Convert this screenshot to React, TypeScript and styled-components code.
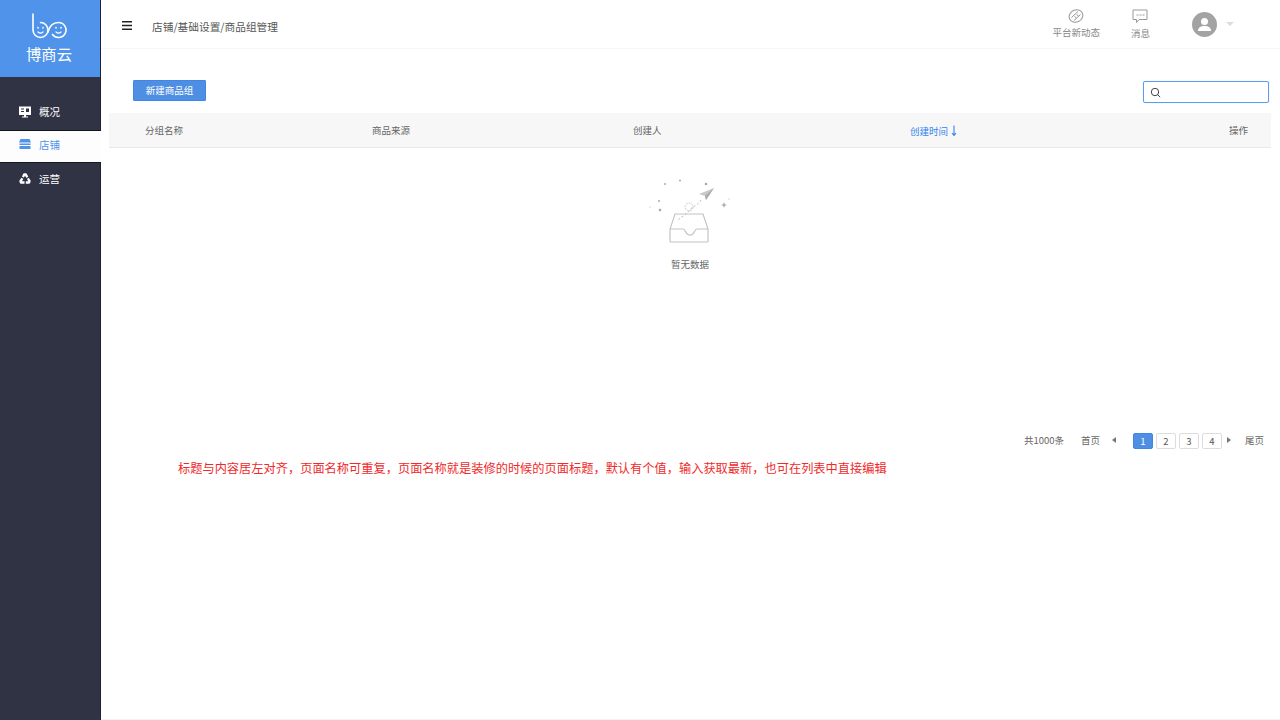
import React from 'react';
import styled, { createGlobalStyle } from 'styled-components';

const GlobalStyle = createGlobalStyle`
  html, body {
    margin: 0;
    height: 100%;
    background: #fff;
  }
  body {
    font-family: "Noto Sans CJK SC", "Noto Sans", sans-serif;
    font-size: 10px;
    color: #555;
    overflow: hidden;
  }
  #root {
    height: 100%;
  }
`;

const Page = styled.div`
  display: flex;
  width: 1280px;
  height: 720px;
`;

const Sidebar = styled.aside`
  width: 100px;
  flex-shrink: 0;
  background: #2f3344;
  border-right: 1px solid #1f2230;
`;

const LogoBox = styled.div`
  height: 77px;
  background: #4f94ea;
  display: flex;
  flex-direction: column;
  align-items: center;
  padding: 13px 2px 0 0;
  box-sizing: border-box;
  color: #fff;
`;

const LogoName = styled.div`
  font-size: 15.3px;
  line-height: 18px;
  margin-top: 5px;
`;

const Nav = styled.nav`
  padding-top: 19px;
`;

const NavItem = styled.div<{ $active?: boolean }>`
  height: 33px;
  display: flex;
  align-items: center;
  gap: 8px;
  padding: 0 0 2px 19px;
  font-size: 10.5px;
  box-sizing: border-box;
  color: ${({ $active }) => ($active ? '#4f94ea' : '#fff')};
  ${({ $active }) =>
    $active &&
    `
    background: #fdfdfd;
    margin: 1px -1px 0 0;
    padding-bottom: 5px;
    border-top: 1px solid #15171f;
    border-bottom: 1px solid #15171f;
  `}
`;

const Main = styled.main`
  flex: 1;
  min-width: 0;
  display: flex;
  flex-direction: column;
  border-bottom: 1px solid #f2f2f2;
  box-sizing: border-box;
`;

const Header = styled.header`
  height: 49px;
  flex-shrink: 0;
  display: flex;
  align-items: center;
  box-sizing: border-box;
  padding: 0 46px 0 21px;
  border-bottom: 1px solid #f6f6f6;
`;

const MenuButton = styled.div`
  display: flex;
  margin-top: 2px;
`;

const Crumbs = styled.div`
  margin: 4px 0 0 20px;
  font-size: 10.7px;
  color: #555;
`;

const HeaderRight = styled.div`
  margin-left: auto;
  display: flex;
  align-items: center;
`;

const HeaderAction = styled.div`
  display: flex;
  flex-direction: column;
  align-items: center;
  gap: 3px;
  margin-right: 31px;
  font-size: 9.5px;
  line-height: 13px;
  color: #888;
`;

const Avatar = styled.div`
  margin-left: 11px;
  width: 25px;
  height: 25px;
  border-radius: 50%;
  background: #a3a3a3;
  display: flex;
  align-items: center;
  justify-content: center;
`;

const Caret = styled.div`
  margin-left: 9px;
  width: 0;
  height: 0;
  border-left: 4px solid transparent;
  border-right: 4px solid transparent;
  border-top: 4px solid #dcdcdc;
`;

const Content = styled.div`
  flex: 1;
  padding: 31px 9px 0 8px;
`;

const Toolbar = styled.div`
  display: flex;
  align-items: flex-start;
  justify-content: space-between;
  padding-left: 24px;
  height: 23px;
  margin-bottom: 10px;
`;

const PrimaryButton = styled.button`
  width: 73px;
  height: 21px;
  padding: 0 0 1px;
  background: #4f8fe3;
  border: 1px solid #3f86e8;
  border-radius: 1px;
  color: #fff;
  font: inherit;
  font-size: 9.5px;
`;

const SearchBox = styled.div`
  width: 126px;
  height: 22px;
  box-sizing: border-box;
  margin: 1px 2px 0 0;
  border: 1px solid #5b9cee;
  border-radius: 2px;
  box-shadow: 0 0 1px rgba(79, 148, 234, 0.5);
  display: flex;
  align-items: center;
  padding-left: 6px;
`;

const TableHead = styled.div`
  display: grid;
  grid-template-columns: 227px 261px 277px 1fr auto;
  height: 35px;
  align-items: center;
  padding: 0 23px 0 36px;
  background: #f7f7f7;
  border-bottom: 1px solid #e8e8e8;
  box-sizing: border-box;
  font-size: 9.5px;
  color: #666;
`;

const HeadCell = styled.div<{ $active?: boolean }>`
  display: flex;
  align-items: center;
  gap: 3px;
  color: ${({ $active }) => ($active ? '#3384ee' : '#666')};
  margin-top: ${({ $active }) => ($active ? '1px' : '-1px')};
`;

const Empty = styled.div`
  height: 283px;
  display: flex;
  flex-direction: column;
  align-items: center;
  padding: 31px 0 0 0;
  box-sizing: border-box;
  color: #666;
  font-size: 9.5px;
`;

const Illustration = styled.div`
  display: flex;
  margin-right: 6px;
`;

const EmptyLabel = styled.div`
  margin-top: 14px;
  line-height: 14px;
`;

const Pagination = styled.div`
  display: flex;
  align-items: center;
  justify-content: flex-end;
  height: 18px;
  padding-right: 7px;
  font-size: 9.5px;
  color: #666;
`;

const PageLink = styled.span<{ $gap: number }>`
  margin-right: ${({ $gap }) => $gap}px;
`;

const Arrow = styled.span<{ $left?: boolean; $before?: number; $gap: number }>`
  width: 0;
  height: 0;
  margin-left: ${({ $before }) => $before ?? 0}px;
  margin-right: ${({ $gap }) => $gap}px;
  border-top: 3px solid transparent;
  border-bottom: 3px solid transparent;
  ${({ $left }) => ($left ? 'border-right: 4px solid #777;' : 'border-left: 4px solid #777;')}
`;

const PageButton = styled.span<{ $active?: boolean }>`
  width: 20px;
  height: 16px;
  margin: 1px 3px 0 0;
  box-sizing: border-box;
  display: flex;
  align-items: center;
  justify-content: center;
  border-radius: 2px;
  border: 1px solid ${({ $active }) => ($active ? '#3f86e8' : '#ddd')};
  background: ${({ $active }) => ($active ? '#4f8fe3' : '#fff')};
  color: ${({ $active }) => ($active ? '#fff' : '#555')};
`;

const Note = styled.div`
  margin: 11px 0 0 69px;
  font-size: 12.22px;
  line-height: 17px;
  white-space: nowrap;
  color: #f02a2a;
`;

const Logo = () => (
  <svg width="36" height="26" viewBox="0 0 36 26" fill="none" stroke="#fff" strokeWidth="1.6" strokeLinecap="round">
    <path d="M2 1v16a7.500 7.500 0 1 0 7.500-7.500" />
    <path d="M17 19c1.500-6 5-9.500 10.500-9.500a7.500 7.500 0 1 1-6 12" />
    <path d="M7 14.500v.5M12 14.500v.5M25 14.500v.5M30 14.500v.5" />
    <path d="M7 19c1.500 1.300 3.500 1.300 5 0M25 19c1.500 1.300 3.500 1.300 5 0" strokeWidth="1.200" />
  </svg>
);

const OverviewIcon = () => (
  <svg width="12" height="12" viewBox="0 0 12 12" fill="#fff">
    <path d="M0 .5h12v8.500H7v1.500h2v1H3v-1h2V9H0z" />
    <path d="M2 2.500h3v1H2zM2 5h3v1H2zM7 2.500h3V6H7z" fill="#2f3344" />
  </svg>
);

const ShopIcon = () => (
  <svg width="12" height="12" viewBox="0 0 12 12" fill="#4f94ea">
    <path d="M1.500 1h9L12 4.500H0zM0.500 5.500h11V11h-11z" />
    <path d="M0 7h12v1H0z" fill="#fff" />
  </svg>
);

const OperateIcon = () => (
  <svg width="12" height="12" viewBox="0 0 12 12" fill="#fff">
    <path d="M4.200 .8C5 .2 7 .2 7.800 .8L9.300 3.800 7.500 5 6 2.800 4.800 4.800 3 3.500z" />
    <path d="M.4 7.500 2.500 4.800 4.300 6 3 8.300H5.500V10.800H2C1 10.800 .2 8.800.4 7.500z" />
    <path d="M11.600 7.500 9.800 4.800 8 6 9.200 8.300H6.800V10.800H10C11 10.800 11.800 8.800 11.600 7.500z" />
  </svg>
);

const MenuIcon = () => (
  <svg width="10" height="9" viewBox="0 0 10 9" fill="#222">
    <path d="M0 0h10v1.500H0zM0 3.700h10v1.500H0zM0 7.500h10V9H0z" />
  </svg>
);

const NewsIcon = () => (
  <svg width="16" height="14" viewBox="0 0 16 14" fill="none" stroke="#999" strokeWidth="1">
    <ellipse cx="8" cy="7" rx="7" ry="6" transform="rotate(-25 8 7)" />
    <path d="M3.500 8.500 10 2.500M6 11.500l6.500-6" />
    <path d="M6.500 7.500l2 1.500M8.500 5.500l2 1.500" />
  </svg>
);

const MessageIcon = () => (
  <svg width="16" height="15" viewBox="0 0 16 15" fill="none" stroke="#999" strokeWidth="1">
    <path d="M1 1h14v9.500H7L4.500 13.500v-3H1z" />
    <path d="M4.500 6h2M7.500 6h2M10.500 6h2" />
  </svg>
);

const UserIcon = () => (
  <svg width="15" height="15" viewBox="0 0 15 15" fill="#fff">
    <circle cx="7.500" cy="4.500" r="3.500" />
    <path d="M1 14c0-3.500 2.500-5 6.500-5s6.500 1.500 6.500 5z" />
  </svg>
);

const SearchIcon = () => (
  <svg width="11" height="11" viewBox="0 0 11 11" fill="none" stroke="#444" strokeWidth="1">
    <circle cx="5" cy="5" r="3.700" />
    <path d="M7.700 7.700l2.500 2.500" />
  </svg>
);

const SortArrow = () => (
  <svg width="6" height="11" viewBox="0 0 6 11" fill="none" stroke="#3384ee" strokeWidth="1.100">
    <path d="M3 0.500v9.500M1 8l2 2.500L5 8" />
  </svg>
);

const EmptyIllustration = () => (
  <svg width="85" height="64" viewBox="0 0 85 64" fill="none">
    <g fill="#aaa">
      <circle cx="20" cy="5" r="1" />
      <circle cx="35" cy="1.500" r="1" />
      <circle cx="61" cy="5" r="1.300" />
      <circle cx="14" cy="22" r="1" />
      <circle cx="15" cy="31" r="1.300" />
      <circle cx="5" cy="28" r=".6" />
      <path d="M79 23l.8 2.200 2.200.8-2.200.8-.8 2.200-.8-2.200-2.200-.8 2.200-.8z" />
      <circle cx="84" cy="20" r=".6" />
    </g>
    <path d="M54 15L69 9 61 21 60 17z" fill="#c8c8c8" />
    <path d="M60 17L69 9 61 21z" fill="#aaa" />
    <path d="M56 21c-2 5-9 6-12 11-2 3-8 6-11 9" stroke="#bbb" strokeDasharray="2 2" />
    <circle cx="44" cy="28" r="4" stroke="#ccc" strokeDasharray="2 1" />
    <path
      d="M30 35h28l5 15v12a1 1 0 0 1-1 1H26a1 1 0 0 1-1-1V50zM25 50h13c3 0 2 6 7 6s4-6 7-6h11"
      stroke="#c4c4c4"
      strokeWidth="1.200"
    />
  </svg>
);

const App = () => (
  <Page>
    <GlobalStyle />
    <Sidebar>
      <LogoBox>
        <Logo />
        <LogoName>博商云</LogoName>
      </LogoBox>
      <Nav>
        <NavItem>
          <OverviewIcon />
          概况
        </NavItem>
        <NavItem $active>
          <ShopIcon />
          店铺
        </NavItem>
        <NavItem>
          <OperateIcon />
          运营
        </NavItem>
      </Nav>
    </Sidebar>
    <Main>
      <Header>
        <MenuButton>
          <MenuIcon />
        </MenuButton>
        <Crumbs>店铺/基础设置/商品组管理</Crumbs>
        <HeaderRight>
          <HeaderAction>
            <NewsIcon />
            平台新动态
          </HeaderAction>
          <HeaderAction>
            <MessageIcon />
            消息
          </HeaderAction>
          <Avatar>
            <UserIcon />
          </Avatar>
          <Caret />
        </HeaderRight>
      </Header>
      <Content>
        <Toolbar>
          <PrimaryButton>新建商品组</PrimaryButton>
          <SearchBox>
            <SearchIcon />
          </SearchBox>
        </Toolbar>
        <TableHead>
          <HeadCell>分组名称</HeadCell>
          <HeadCell>商品来源</HeadCell>
          <HeadCell>创建人</HeadCell>
          <HeadCell $active>
            创建时间 <SortArrow />
          </HeadCell>
          <HeadCell>操作</HeadCell>
        </TableHead>
        <Empty>
          <Illustration>
            <EmptyIllustration />
          </Illustration>
          <EmptyLabel>暂无数据</EmptyLabel>
        </Empty>
        <Pagination>
          <PageLink $gap={17}>共1000条</PageLink>
          <PageLink $gap={12}>首页</PageLink>
          <Arrow $left $gap={17} />
          <PageButton $active>1</PageButton>
          <PageButton>2</PageButton>
          <PageButton>3</PageButton>
          <PageButton>4</PageButton>
          <Arrow $before={2} $gap={14} />
          <PageLink $gap={0}>尾页</PageLink>
        </Pagination>
        <Note>标题与内容居左对齐，页面名称可重复，页面名称就是装修的时候的页面标题，默认有个值，输入获取最新，也可在列表中直接编辑</Note>
      </Content>
    </Main>
  </Page>
);

export default App;
